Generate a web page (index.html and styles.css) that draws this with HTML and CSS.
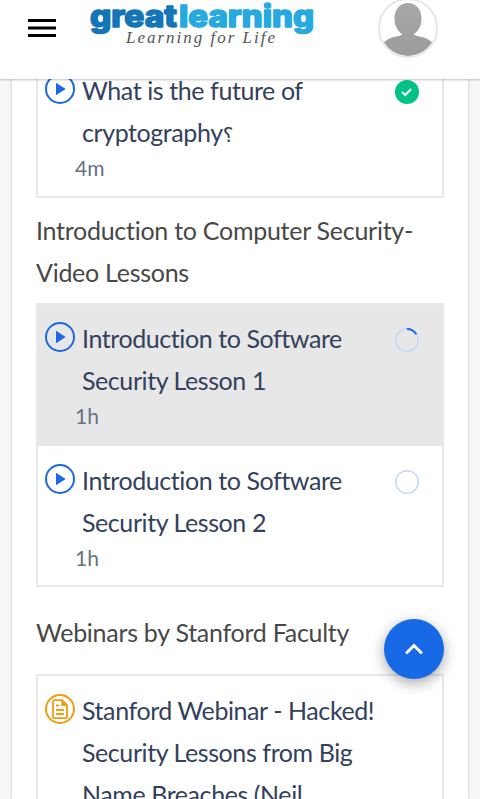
FILE: index.html
```html
<!DOCTYPE html>
<html lang="en">
<head>
<meta charset="utf-8">
<meta name="viewport" content="width=device-width">
<title>Course content</title>
<link rel="stylesheet" href="styles.css">
</head>
<body>
<svg class="defs" width="0" height="0">
  <symbol id="play" viewBox="0 0 30 30"><circle cx="15" cy="15" r="14" fill="none" stroke="#1b68e0" stroke-width="2"/><path d="M11 8.700v12.600l9.700-6.300z" fill="#1b68e0"/></symbol>
  <symbol id="doc" viewBox="0 0 30 30"><g fill="none" stroke="#f39c12"><circle cx="15" cy="15" r="14" stroke-width="2"/><path d="M17 6.200H9.500q-1.500 0-1.500 1.500v15q0 1.500 1.500 1.500h11q1.500 0 1.500-1.500V11z" stroke-width="1.800" stroke-linejoin="round"/><path d="M11 11.500h3M11 16h8M11 20h8" stroke-width="1.800"/></g><path d="M16.300 6v6H22.500z" fill="#f39c12"/></symbol>
</svg>
<header class="topbar">
  <svg class="menu" width="28" height="18" viewBox="0 0 28 18"><path d="M0 1.500h28M0 9h28M0 16.500h28" stroke="#000" stroke-width="3"/></svg>
  <svg class="logo" width="228" height="50" viewBox="0 0 228 50">
    <g class="brand"><text class="great" x="2" y="26.500" textLength="87" lengthAdjust="spacingAndGlyphs">great</text><text class="learning" x="91" y="26.500" textLength="135" lengthAdjust="spacingAndGlyphs">learning</text></g>
    <text class="tagline" x="38" y="43" textLength="149">Learning for Life</text>
  </svg>
  <svg class="avatar" width="60" height="60" viewBox="0 0 60 60">
    <defs><linearGradient id="ag" x2="0" y2="1"><stop stop-color="#a8a8a6"/><stop offset="1" stop-color="#9b9b99"/></linearGradient><clipPath id="ac"><circle cx="30" cy="30" r="28"/></clipPath></defs>
    <g clip-path="url(#ac)" fill="url(#ag)"><path d="M30 5c8.500 0 13.500 6.500 13.500 16 0 7-3.500 12.500-7.500 15 0 3 13 1.500 19 9.500V60H5V45.500c6-8 19-6.500 19-9.500C20 33.500 16.500 28 16.500 21 16.500 11.500 21.500 5 30 5z"/></g>
    <circle cx="30" cy="30" r="29" fill="none" stroke="#e5e7e9" stroke-width="2"/>
  </svg>
</header>
<main class="card">
  <ul class="list">
    <li class="row">
      <svg class="kind"><use href="#play"/></svg>
      <div class="info"><p class="title">What is the future of cryptography<span class="mark">؟</span></p><p class="time">4m</p></div>
      <svg class="state" viewBox="0 0 24 24"><circle cx="12" cy="12" r="12" fill="#02c385"/><path d="M7.200 12l3 3 6-6" fill="none" stroke="#fff" stroke-width="2"/></svg>
    </li>
  </ul>
  <h2 class="heading">Introduction to Computer Security- Video Lessons</h2>
  <ul class="list">
    <li class="row active">
      <svg class="kind"><use href="#play"/></svg>
      <div class="info"><p class="title">Introduction to Software Security Lesson 1</p><p class="time">1h</p></div>
      <svg class="state" viewBox="0 0 24 24"><circle cx="12" cy="12" r="11.300" fill="none" stroke="#c5d8f6" stroke-width="1.500"/><path d="M12 1a11 11 0 0 1 9.300 5.200" fill="none" stroke="#1b68e0" stroke-width="2"/></svg>
    </li>
    <li class="row">
      <svg class="kind"><use href="#play"/></svg>
      <div class="info"><p class="title">Introduction to Software Security Lesson 2</p><p class="time">1h</p></div>
      <svg class="state" viewBox="0 0 24 24"><circle cx="12" cy="12" r="11.300" fill="none" stroke="#c5d8f6" stroke-width="1.500"/></svg>
    </li>
  </ul>
  <h2 class="heading faculty">Webinars by Stanford Faculty</h2>
  <ul class="list webinars">
    <li class="row">
      <svg class="kind"><use href="#doc"/></svg>
      <div class="info"><p class="title">Stanford Webinar - Hacked! Security Lessons from Big Name Breaches (Neil</p></div>
    </li>
  </ul>
</main>
<button class="to-top" aria-label="Back to top"><svg width="18" height="12" viewBox="0 0 18 12"><path d="M2 9.500l7-7 7 7" fill="none" stroke="#fff" stroke-width="3" stroke-linecap="round"/></svg></button>
</body>
</html>
```
FILE: styles.css
```css
* { box-sizing: border-box; }
html, body { height: 799px; overflow: hidden; }
body { margin: 0; background: #f7f9f9; font-family: Lato, sans-serif; font-variant-ligatures: none; color: #33415c; }
p, h2, ul { margin: 0; padding: 0; }
.defs { position: absolute; }
.topbar { position: relative; z-index: 2; display: flex; align-items: flex-start; height: 79px; padding-left: 28px; background: #fff; box-shadow: 0 1px 2px rgba(0,0,0,.25); }
.menu { margin-top: 19px; }
.logo { margin-left: 32px; overflow: visible; }
.avatar { margin: -2px 0 0 62px; }
.brand { font: 800 30px Inter, sans-serif; stroke-width: 1.5; stroke-linejoin: round; }
.great { fill: #1475b7; stroke: #1475b7; }
.learning { fill: #25a9df; stroke: #25a9df; }
.tagline { font: italic 17px "Liberation Serif", serif; fill: #555; }
.card { height: 720px; margin: 0 12px; padding: 0 24px; background: #fff; box-shadow: 0 0 3px rgba(0,0,0,.25); overflow: hidden; }
.list { list-style: none; border: 2px solid #e7e9ea; }
.list:first-child { margin-top: -24px; }
.row { display: flex; align-items: flex-start; height: 141px; padding: 12px 23px 0 7px; }
.list:first-child .row { height: 139px; }
.row.active { background: #e7e7e7; }
.row:nth-child(2) { height: 139px; padding-top: 13px; }
.webinars .row { padding-top: 13px; }
.kind { flex: none; width: 30px; height: 30px; margin-top: 5px; }
.info { flex: 1; padding-left: 7px; }
.title { font-size: 25px; letter-spacing: -.42px; line-height: 42px; }
.time { margin-left: -7px; font-size: 21px; line-height: 30px; color: #667186; }
.mark { font-family: "DejaVu Sans", sans-serif; font-size: 20px; line-height: 1; }
.state { flex: none; width: 24px; height: 24px; margin-top: 11px; overflow: visible; }
.heading { padding: 11px 0 10px; font-size: 25px; font-weight: 400; letter-spacing: -.27px; line-height: 42px; color: #484848; }
.faculty { padding: 24px 0 21px; }
.to-top { position: fixed; z-index: 3; left: 384px; top: 619px; display: flex; align-items: center; justify-content: center; width: 60px; height: 60px; padding: 0; border: 0; border-radius: 50%; background: #1869e5; box-shadow: 0 4px 14px rgba(0,0,0,.35); }
```
